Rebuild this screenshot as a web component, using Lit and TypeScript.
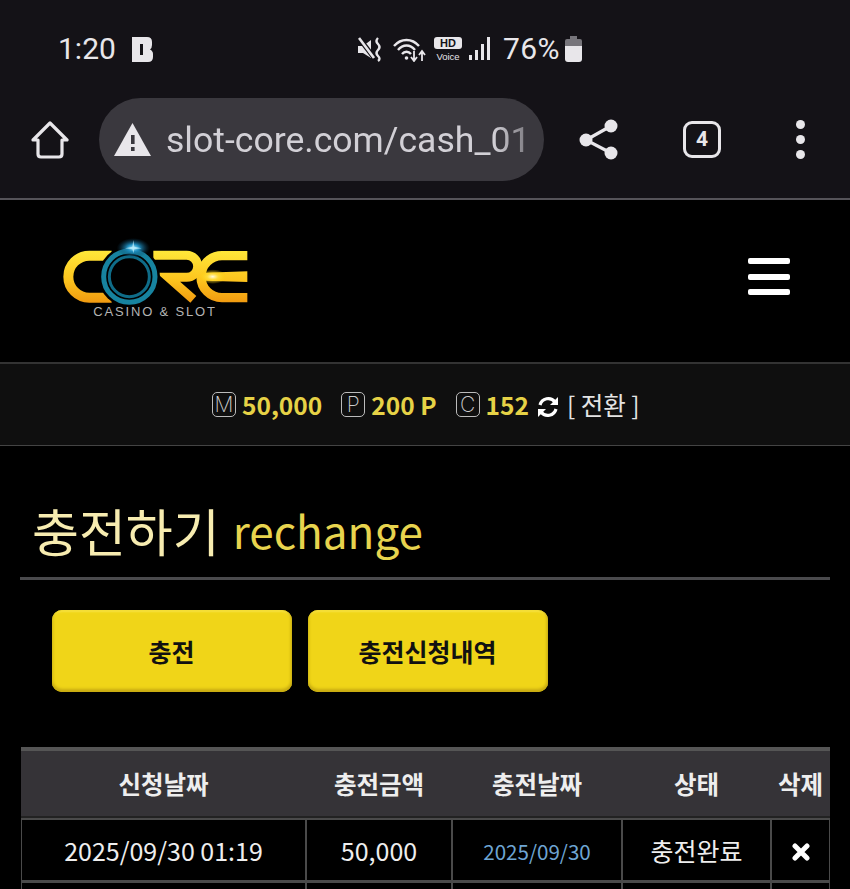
import { LitElement, html, css, svg } from "lit";
import { customElement } from "lit/decorators.js";

const logo = svg`<svg class="logo" viewBox="0 0 690 330" width="230" height="110">
  <defs>
    <linearGradient id="g" x1="0" y1="92" x2="0" y2="248" gradientUnits="userSpaceOnUse">
      <stop offset="0" stop-color="#ffe83a"/><stop offset="0.55" stop-color="#fdc51e"/><stop offset="1" stop-color="#f09a10"/>
    </linearGradient>
    <radialGradient id="glow"><stop offset="0" stop-color="#9fe8ff"/><stop offset="0.35" stop-color="#1f8fc0"/><stop offset="1" stop-color="#0a3a55" stop-opacity="0"/></radialGradient>
    <radialGradient id="glow2"><stop offset="0" stop-color="#fffbe0"/><stop offset="0.4" stop-color="#ffe040" stop-opacity="0.8"/><stop offset="1" stop-color="#ffd000" stop-opacity="0"/></radialGradient>
  </defs>
  <path d="M215 107H148A63 63 0 0 0 148 233H215" fill="none" stroke="url(#g)" stroke-width="30"/>
  <path d="M340 106H440A33 33 0 0 1 440 172H385L460 238" fill="none" stroke="url(#g)" stroke-width="27"/>
  <path d="M622 107H546A63 63 0 0 0 546 233H622" fill="none" stroke="url(#g)" stroke-width="28"/>
  <path d="M495 158L622 154V186L495 182Z" fill="url(#g)"/>
  <ellipse cx="518" cy="170" rx="42" ry="22" fill="url(#glow2)"/>
  <circle cx="268" cy="170" r="92" fill="#000"/>
  <circle cx="268" cy="170" r="77" fill="none" stroke="#17839f" stroke-width="15"/>
  <circle cx="268" cy="170" r="60" fill="none" stroke="#0f6c88" stroke-width="9"/>
  <ellipse cx="280" cy="84" rx="50" ry="30" fill="url(#glow)"/>
  <path d="M280 60L283 80L305 85L283 88L280 100L277 88L255 85L277 80Z" fill="#c8f4ff" opacity="0.7"/>
  <text x="160" y="288" textLength="365" font-family="'Liberation Sans',sans-serif" font-size="39" fill="#b4b4b4">CASINO &amp; SLOT</text>
</svg>`;

@customElement("app-root")
export class AppRoot extends LitElement {
  static styles = css`
    :host { display: block; width: 850px; height: 889px; overflow: hidden; background: #000; color: #fff;
      font-family: "Noto Sans CJK KR", "Noto Sans", sans-serif; }
    .status { height: 81px; background: #141217; display: flex; align-items: center; padding: 17px 0 0 58px; box-sizing: border-box; color: #e8e6ea; font-family: Roboto, sans-serif; }
    .st-left { width: 300px; display: flex; align-items: center; gap: 16px; }
    .time { font-size: 30px; line-height: 34px; }
    .st-right { display: flex; align-items: center; }
    .pct { font-size: 30px; line-height: 34px; margin: 0 5px 0 12px; letter-spacing: 0.4px; }
    .hd { display: flex; flex-direction: column; align-items: center; width: 28px; margin: 0 7px 0 8px; }
    .hd b { display: block; width: 28px; height: 12px; background: #e8e6ea; color: #141217; border-radius: 3px; font: 700 11px/12px "Liberation Sans", sans-serif; text-align: center; }
    .hd span { font: 400 9.5px/11px "Liberation Sans", sans-serif; margin-top: 2px; }
    .toolbar { height: 117px; background: #141217; border-bottom: 2px solid #555359; display: flex; align-items: center; padding-left: 31px; }
    .pill { margin-left: 30px; width: 445px; height: 83px; box-sizing: border-box; background: #3a383e; border-radius: 42px; display: flex; align-items: center; padding-left: 15px; flex: none; }
    .url { margin-left: 15px; font: 400 35.6px/44px Roboto, sans-serif; color: #d2d0d6; white-space: nowrap; -webkit-mask-image: linear-gradient(90deg, #000 90%, rgba(0,0,0,0.4) 100%); mask-image: linear-gradient(90deg, #000 90%, rgba(0,0,0,0.4) 100%); }
    .share { margin-left: 35px; }
    .tabs { margin-left: 64px; width: 38px; height: 37px; box-sizing: border-box; border: 3.5px solid #e8e6ea; border-radius: 9px; display: flex; align-items: center; justify-content: center; font: 700 21px/1 Roboto, sans-serif; color: #e8e6ea; }
    .dots { margin-left: 75px; display: flex; flex-direction: column; gap: 6px; }
    .dots i { display: block; width: 9px; height: 9px; border-radius: 50%; background: #e8e6ea; }
    .hdr { height: 164px; border-bottom: 2px solid #333; box-sizing: border-box; display: flex; align-items: flex-start; justify-content: space-between; padding: 20px 60px 0 40px; }
    .burger { display: flex; flex-direction: column; gap: 9.5px; margin-top: 38px; }
    .burger i { display: block; width: 42px; height: 6px; border-radius: 2px; background: #fff; }
    .points { height: 82px; background: #0f0f0f; border-bottom: 1px solid #444; box-sizing: border-box; display: flex; align-items: center; justify-content: flex-start; padding-left: 212px; }
    .tag { width: 24px; height: 25px; box-sizing: border-box; border: 1px solid #bbb; border-radius: 5px; display: flex; align-items: center; justify-content: center; font: 200 21px/1 Inter, sans-serif; color: #ccc; margin-right: 6px; }
    .amt { font-size: 24.5px; font-weight: 700; line-height: 30px; color: #e6d246; margin-right: 19px; }
    .amt.last { margin-right: 8px; }
    .swap { margin-top: 4px; }
    .conv { font-size: 24.5px; line-height: 30px; color: #e4e4e4; margin-left: 8px; }
    .title { margin: 0 20px; height: 134px; box-sizing: border-box; border-bottom: 3px solid #4a4a4d; display: flex; align-items: flex-end; padding: 0 0 13px 12px; font-weight: 400; color: #f7ecb0; font-size: 51px; line-height: 68px; }
    .title em { font-style: normal; font-size: 44px; color: #e8d44e; margin-left: 13px; }
    .btns { display: flex; gap: 16px; padding: 30px 0 0 51.5px; }
    .btn { width: 240px; height: 82px; box-sizing: border-box; border-radius: 10px; background: #f0d518; box-shadow: inset 0 -3px 3px #c7ab12, inset 3px 0 3px -2px #dcc315, inset -3px 0 3px -2px #c7ab12, inset 0 2px 2px #f7e240; color: #111; font-size: 25px; font-weight: 700; display: flex; align-items: center; justify-content: center; }
    table { margin: 55px 0 0 21px; width: 809px; table-layout: fixed; border-collapse: separate; border-spacing: 0; }
    th { height: 71px; box-sizing: border-box; padding: 0; background: #353337; border-top: 4px solid #555; border-bottom: 2px solid #222; font-size: 24.5px; font-weight: 700; color: #eee; }
    td { height: 63px; box-sizing: border-box; padding: 0; text-align: center; font-size: 25px; color: #eee; border: 1px solid #4a4a4a; border-width: 2px 1.5px 1.5px; background: #000; }
    td.date { font-size: 20.6px; color: #6ea5d4; padding-top: 2px; }
    td svg { display: block; margin: 4px auto 0; }
  `;

  render() {
    return html`
      <div class="status">
        <div class="st-left">
          <span class="time">1:20</span>
          <svg width="21" height="25" viewBox="0 0 21 25"><path fill-rule="evenodd" d="M0 0H15Q20 0 20 5V8Q20 11 18 12.5Q21 14 21 17V20Q21 25 16 25H0ZM8 7V18H11V7Z" fill="#e8e6ea"/></svg>
        </div>
        <div class="st-right">
          <svg width="25" height="25" viewBox="0 0 25 25"><path d="M0 9H5L13 3V21L5 16H0Z" fill="#e8e6ea"/><path d="M1 1L17 22" stroke="#141217" stroke-width="5"/><path d="M1 1L16 21" stroke="#e8e6ea" stroke-width="2.6"/><path d="M20 1Q17 4 20 7T20 13T20 19T20 24" fill="none" stroke="#e8e6ea" stroke-width="2.4"/></svg>
          <svg style="margin-left:10px" width="33" height="25" viewBox="0 0 33 25"><g fill="none" stroke="#e8e6ea" stroke-width="2.4"><path d="M1 9C8 1 19 1 26 9"/><path d="M5 13C10 7 17 7 22 13"/><path d="M9 17C11.500 14 15.500 14 18 17"/></g><circle cx="13.500" cy="21" r="1.800" fill="#e8e6ea"/><path d="M21 14V23M18 20L21 24L24 20M29 24V15M26 18L29 14L32 18" fill="none" stroke="#e8e6ea" stroke-width="1.800"/></svg>
          <div class="hd"><b>HD</b><span>Voice</span></div>
          <svg width="22" height="24" viewBox="0 0 22 24"><g fill="#e8e6ea"><rect x="0" y="18" width="3" height="5"/><rect x="6" y="13" width="3" height="10"/><rect x="12" y="7" width="3" height="16"/><rect x="18" y="0" width="3" height="23"/></g></svg>
          <span class="pct">76%</span>
          <svg width="17" height="26" viewBox="0 0 17 26"><path d="M5 0H12V3H15Q17 3 17 5V11H0V5Q0 3 2 3H5Z" fill="#77757b"/><path d="M0 10H17V23Q17 26 14 26H3Q0 26 0 23Z" fill="#e8e6ea"/></svg>
        </div>
      </div>
      <div class="toolbar">
        <svg width="38" height="38" viewBox="0 0 38 38"><path d="M19 2L36 19H31V33Q31 36 28 36H10Q7 36 7 33V19H2Z" fill="none" stroke="#e8e6ea" stroke-width="3.200" stroke-linejoin="round"/></svg>
        <div class="pill">
          <svg width="37" height="33" viewBox="0 0 37 33"><path d="M18.500 0L37 33H0Z" fill="#e8e6ea"/><rect x="17" y="12" width="3.600" height="9" fill="#3a383e"/><rect x="17" y="24" width="3.600" height="4" fill="#3a383e"/></svg>
          <span class="url">slot-core.com/cash_01</span>
        </div>
        <svg class="share" width="40" height="41" viewBox="0 0 40 41"><g fill="#e8e6ea"><circle cx="32" cy="7" r="6.500"/><circle cx="7" cy="21" r="6.500"/><circle cx="32" cy="34" r="6.500"/></g><path d="M32 7L7 21L32 34" fill="none" stroke="#e8e6ea" stroke-width="3.200"/></svg>
        <div class="tabs">4</div>
        <div class="dots"><i></i><i></i><i></i></div>
      </div>
      <div class="hdr">
        ${logo}
        <div class="burger"><i></i><i></i><i></i></div>
      </div>
      <div class="points">
        <span class="tag">M</span><span class="amt">50,000</span>
        <span class="tag">P</span><span class="amt">200 P</span>
        <span class="tag">C</span><span class="amt last">152</span>
        <svg class="swap" width="22" height="24" viewBox="0 0 22 24"><g fill="none" stroke="#fff" stroke-width="3.200"><path d="M3 10A8.500 8.500 0 0 1 18 7"/><path d="M19 14A8.500 8.500 0 0 1 4 17"/></g><path d="M21 2V10H13Z" fill="#fff"/><path d="M1 22V14H9Z" fill="#fff"/></svg>
        <span class="conv">[ 전환 ]</span>
      </div>
      <div class="title">충전하기<em>rechange</em></div>
      <div class="btns"><div class="btn">충전</div><div class="btn">충전신청내역</div></div>
      <table>
        <colgroup><col style="width:285px"/><col style="width:146px"/><col style="width:170px"/><col style="width:149px"/><col style="width:59px"/></colgroup>
        <thead><tr><th>신청날짜</th><th>충전금액</th><th>충전날짜</th><th>상태</th><th>삭제</th></tr></thead>
        <tbody>
          <tr><td>2025/09/30 01:19</td><td>50,000</td><td class="date">2025/09/30</td><td>충전완료</td>
            <td><svg width="18" height="18" viewBox="0 0 18 18"><path d="M3 3L15 15M15 3L3 15" stroke="#fff" stroke-width="5" stroke-linecap="round"/></svg></td></tr>
          <tr><td></td><td></td><td></td><td></td><td></td></tr>
        </tbody>
      </table>
    `;
  }
}
